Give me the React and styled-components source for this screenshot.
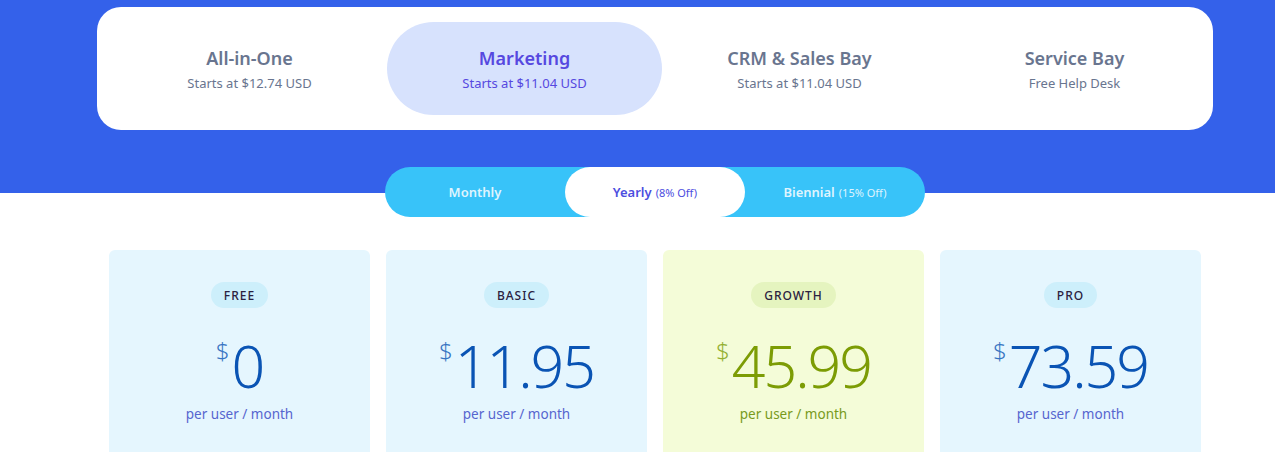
import React from 'react';
import styled, {createGlobalStyle} from 'styled-components';

const GlobalStyle = createGlobalStyle`
    * { box-sizing: border-box; }
    body {
        margin: 0;
        background: #ffffff;
        font-family: "Noto Sans", "Open Sans", sans-serif;
    }
`;

const products = [
    {name: 'All-in-One',      sub: 'Starts at $12.74 USD'},
    {name: 'Marketing',       sub: 'Starts at $11.04 USD', active: true},
    {name: 'CRM & Sales Bay', sub: 'Starts at $11.04 USD'},
    {name: 'Service Bay',     sub: 'Free Help Desk'}
];

const periods = [
    {label: 'Monthly'},
    {label: 'Yearly', off: '(8% Off)', active: true},
    {label: 'Biennial', off: '(15% Off)'}
];

const plans = [
    {tag: 'FREE',   price: '0'},
    {tag: 'BASIC',  price: '11.95'},
    {tag: 'GROWTH', price: '45.99', growth: true},
    {tag: 'PRO',    price: '73.59'}
];

export default function App() {
    return (
        <Page>
            <GlobalStyle />
            <Hero>
                <ProductCard>
                    {products.map(p => (
                        <ProductTab key={p.name} $active={p.active}>
                            <ProductName>{p.name}</ProductName>
                            <ProductSub>{p.sub}</ProductSub>
                        </ProductTab>
                    ))}
                </ProductCard>
                <Toggle>
                    {periods.map(p => (
                        <Period key={p.label} $active={p.active}>
                            {p.label}
                            {p.off && <Off>{p.off}</Off>}
                        </Period>
                    ))}
                </Toggle>
            </Hero>
            <Plans>
                {plans.map(p => (
                    <PlanCard key={p.tag} $growth={p.growth}>
                        <Badge $growth={p.growth}>{p.tag}</Badge>
                        <Price $growth={p.growth}>
                            <Dollar>$</Dollar>
                            {p.price}
                        </Price>
                        <PerUser $growth={p.growth}>per user / month</PerUser>
                    </PlanCard>
                ))}
            </Plans>
        </Page>
    );
}

const Page = styled.div`
    width: 1275px;
    height: 452px;
    overflow: hidden;
`;

const Hero = styled.div`
    background: linear-gradient(#3461ea 193px, #ffffff 193px);
    padding: 7px 0 0 97px;
    display: flex;
    flex-direction: column;
    align-items: flex-start;
`;

const ProductCard = styled.div`
    width: 1116px;
    background: #ffffff;
    border-radius: 24px;
    padding: 15px 1px 15px 15px;
    display: grid;
    grid-template-columns: repeat(4, 275px);
`;

const ProductTab = styled.div`
    height: 93px;
    border-radius: 47px;
    display: flex;
    flex-direction: column;
    align-items: center;
    justify-content: center;
    gap: 4px;
    background: ${p => p.$active ? '#d7e2fd' : 'transparent'};
    color: ${p => p.$active ? '#5648e0' : '#69758f'};
`;

const ProductName = styled.div`
    font-size: 18px;
    font-weight: 600;
    line-height: 24px;
`;

const ProductSub = styled.div`
    font-size: 13px;
    line-height: 18px;
`;

const Toggle = styled.div`
    margin: 37px 0 0 288px;
    width: 540px;
    height: 50px;
    border-radius: 25px;
    background: #38c3f9;
    display: grid;
    grid-template-columns: repeat(3, 180px);
`;

const Period = styled.div`
    display: flex;
    align-items: center;
    justify-content: center;
    gap: 4px;
    border-radius: 25px;
    font-size: 13px;
    font-weight: 600;
    background: ${p => p.$active ? '#ffffff' : 'transparent'};
    color: ${p => p.$active ? '#4d4ee0' : '#dff4fe'};
`;

const Off = styled.span`
    font-size: 11px;
    font-weight: 400;
`;

const Plans = styled.div`
    margin-top: 33px;
    margin-left: 109px;
    display: grid;
    grid-template-columns: repeat(4, 261px);
    gap: 16px;
`;

const PlanCard = styled.div`
    height: 220px;
    border-radius: 6px;
    background: ${p => p.$growth ? '#f4fcd8' : '#e5f6fe'};
    display: flex;
    flex-direction: column;
    align-items: center;
    padding-top: 32px;
`;

const Badge = styled.div`
    height: 26px;
    padding: 0 13px;
    border-radius: 13px;
    display: flex;
    align-items: center;
    font-size: 12px;
    font-weight: 500;
    letter-spacing: 1px;
    color: #2a2140;
    background: ${p => p.$growth ? '#e5f4bf' : '#cdeffb'};
`;

const Price = styled.div`
    margin-top: 30px;
    display: flex;
    align-items: flex-start;
    font-size: 59px;
    font-weight: 300;
    line-height: 54px;
    letter-spacing: -2px;
    color: ${p => p.$growth ? '#7c9c04' : '#0a54b4'};
`;

const Dollar = styled.span`
    font-size: 24px;
    line-height: 26px;
    margin-right: 2px;
    letter-spacing: 0;
    font-weight: 300;
    opacity: 0.8;
`;

const PerUser = styled.div`
    margin-top: 14px;
    font-size: 13.5px;
    line-height: 16px;
    color: ${p => p.$growth ? '#789a1c' : '#5665cf'};
`;
